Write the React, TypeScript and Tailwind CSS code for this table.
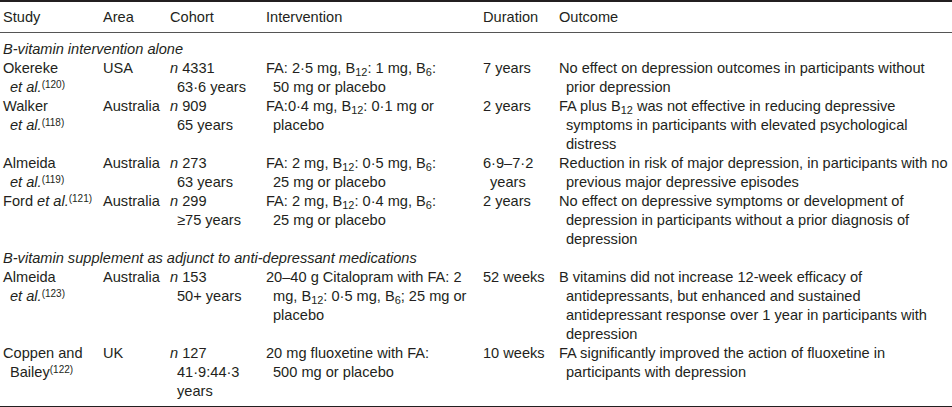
import React from "react";

type Line = React.ReactNode;

const B12 = (
  <>
    B<sub>12</sub>
  </>
);
const B6 = (
  <>
    B<sub>6</sub>
  </>
);

function Cell({ lines }: { lines: Line[] }) {
  return (
    <div className="pl-[7px] -indent-[7px] whitespace-nowrap">
      {lines.map((l, i) => (
        <React.Fragment key={i}>
          {i > 0 && <br />}
          {l}
        </React.Fragment>
      ))}
    </div>
  );
}

const EtAl = ({ n }: { n: string }) => (
  <>
    <i>et al.</i>
    <sup className="text-[10px] -top-[0.45em]">({n})</sup>
  </>
);

type Row = {
  study: Line[];
  area: string;
  cohort: Line[];
  intervention: Line[];
  duration: Line[];
  outcome: Line[];
};

const group1: Row[] = [
  {
    study: ["Okereke", <EtAl n="120" />],
    area: "USA",
    cohort: [<><i>n</i> 4331</>, "63·6 years"],
    intervention: [<>FA: 2·5 mg, {B12}: 1 mg, {B6}:</>, "50 mg or placebo"],
    duration: ["7 years"],
    outcome: ["No effect on depression outcomes in participants without", "prior depression"],
  },
  {
    study: ["Walker", <EtAl n="118" />],
    area: "Australia",
    cohort: [<><i>n</i> 909</>, "65 years"],
    intervention: [<>FA:0·4 mg, {B12}: 0·1 mg or</>, "placebo"],
    duration: ["2 years"],
    outcome: [
      <>FA plus {B12} was not effective in reducing depressive</>,
      "symptoms in participants with elevated psychological",
      "distress",
    ],
  },
  {
    study: ["Almeida", <EtAl n="119" />],
    area: "Australia",
    cohort: [<><i>n</i> 273</>, "63 years"],
    intervention: [<>FA: 2 mg, {B12}: 0·5 mg, {B6}:</>, "25 mg or placebo"],
    duration: ["6·9–7·2", "years"],
    outcome: [
      "Reduction in risk of major depression, in participants with no",
      "previous major depressive episodes",
    ],
  },
  {
    study: [<>Ford <EtAl n="121" /></>],
    area: "Australia",
    cohort: [<><i>n</i> 299</>, "≥75 years"],
    intervention: [<>FA: 2 mg, {B12}: 0·4 mg, {B6}:</>, "25 mg or placebo"],
    duration: ["2 years"],
    outcome: [
      "No effect on depressive symptoms or development of",
      "depression in participants without a prior diagnosis of",
      "depression",
    ],
  },
];

const group2: Row[] = [
  {
    study: ["Almeida", <EtAl n="123" />],
    area: "Australia",
    cohort: [<><i>n</i> 153</>, "50+ years"],
    intervention: [
      "20–40 g Citalopram with FA: 2",
      <>mg, {B12}: 0·5 mg, {B6}; 25 mg or</>,
      "placebo",
    ],
    duration: ["52 weeks"],
    outcome: [
      "B vitamins did not increase 12-week efficacy of",
      "antidepressants, but enhanced and sustained",
      "antidepressant response over 1 year in participants with",
      "depression",
    ],
  },
  {
    study: [
      "Coppen and",
      <>
        Bailey<sup className="text-[10px] -top-[0.45em]">(122)</sup>
      </>,
    ],
    area: "UK",
    cohort: [<><i>n</i> 127</>, "41·9:44·3", "years"],
    intervention: ["20 mg fluoxetine with FA:", "500 mg or placebo"],
    duration: ["10 weeks"],
    outcome: ["FA significantly improved the action of fluoxetine in", "participants with depression"],
  },
];

function DataRow({ r, last }: { r: Row; last?: boolean }) {
  const td = `align-top pl-[3px] p-0 ${last ? "pb-[5px]" : ""}`;
  return (
    <tr>
      <td className={td}>
        <Cell lines={r.study} />
      </td>
      <td className={td}>
        <Cell lines={[r.area]} />
      </td>
      <td className={td}>
        <Cell lines={r.cohort} />
      </td>
      <td className={td}>
        <Cell lines={r.intervention} />
      </td>
      <td className={td}>
        <Cell lines={r.duration} />
      </td>
      <td className={td}>
        <Cell lines={r.outcome} />
      </td>
    </tr>
  );
}

export default function App() {
  return (
    <div className="w-[952px] bg-white text-[#231f20] font-['Liberation_Sans',Arial,sans-serif] text-[14.6px] leading-[19px]">
      <table className="w-[952px] table-fixed border-collapse">
        <colgroup>
          <col className="w-[100px]" />
          <col className="w-[67px]" />
          <col className="w-[96px]" />
          <col className="w-[217px]" />
          <col className="w-[76px]" />
          <col className="w-[396px]" />
        </colgroup>
        <thead>
          <tr className="border-t-2 border-b border-t-[#231f20] border-b-[#555]">
            {["Study", "Area", "Cohort", "Intervention", "Duration", "Outcome"].map((h) => (
              <th key={h} className="text-left font-normal pl-[3px] pt-[6px] pb-[5px]">
                {h}
              </th>
            ))}
          </tr>
        </thead>
        <tbody>
          <tr>
            <td colSpan={6} className="pl-[3px] pt-[7px] italic">
              B-vitamin intervention alone
            </td>
          </tr>
          {group1.map((r, i) => (
            <DataRow key={i} r={r} />
          ))}
          <tr>
            <td colSpan={6} className="pl-[3px] italic">
              B-vitamin supplement as adjunct to anti-depressant medications
            </td>
          </tr>
          {group2.map((r, i) => (
            <DataRow key={i} r={r} last={i === group2.length - 1} />
          ))}
          <tr className="border-t-2 border-t-[#231f20]">
            <td colSpan={6} className="p-0 h-0"></td>
          </tr>
        </tbody>
      </table>
    </div>
  );
}
